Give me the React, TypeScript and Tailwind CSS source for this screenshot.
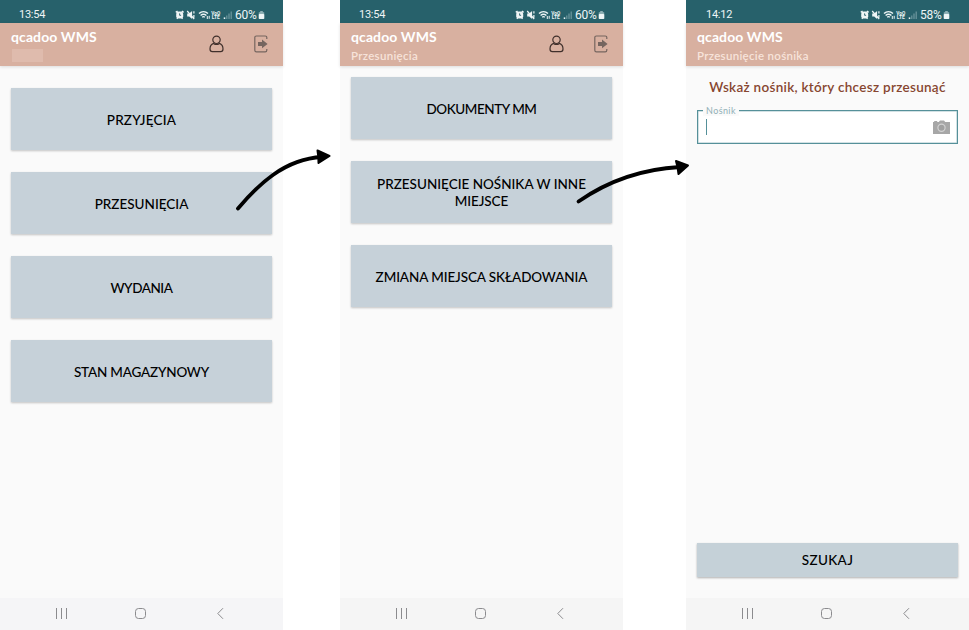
import React from "react";

const FONT = "font-['Lato','Open_Sans',sans-serif]";

function StatusIcons() {
  return (
    <svg width="58" height="12" viewBox="0 0 58 12" fill="none" stroke="#eef5f6">
      {/* alarm clock */}
      <rect x="1.2" y="2.600" width="7" height="7" rx="2.400" fill="#eef5f6" stroke="none" />
      <path d="M.8 3.400 2.600 2M8.600 3.400 6.800 2M1.800 9.800l1-1M7.600 9.800l-1-1" strokeWidth="1.400" />
      <path d="M4.600 4.400v1.900h1.500" stroke="#27616b" strokeWidth=".9" />
      {/* muted speaker */}
      <path d="M12.200 4.400h2l2.900-2.400v8l-2.900-2.400h-2z" fill="#eef5f6" stroke="none" />
      <path d="M12.200 2l7 8M18.900 2.200v2.200M18.900 6v2.800" strokeWidth="1.200" />
      {/* wifi */}
      <path d="M24 4.600c2.600-2.400 6.400-2.400 9 0M25.600 6.500c1.800-1.600 4-1.600 5.800 0M27.200 8.200c.8-.7 1.800-.7 2.600 0" strokeWidth="1.400" />
      <path d="M32.300 7v3M34.200 6.800v3" strokeWidth="1" />
      {/* signal */}
      <path d="M49.500 10V8.400" strokeWidth="1.500" />
      <path d="M51.800 10V6.500M54 10V4.500M56.200 10V2.500" stroke="#6f989f" strokeWidth="1.200" />
      <g fill="#eef5f6" stroke="none" fontFamily="Roboto, sans-serif" fontWeight="700" fontSize="5">
        <text x="36.300" y="5.600" textLength="9" lengthAdjust="spacingAndGlyphs">VoO</text>
        <text x="36.800" y="10.200" textLength="8" lengthAdjust="spacingAndGlyphs">LTE</text>
      </g>
    </svg>
  );
}

function StatusBar({ time, battery, inset }: { time: string; battery: string; inset: string }) {
  return (
    <div className={`flex h-[23px] shrink-0 items-end justify-between bg-[#27616b] font-['Roboto',sans-serif] text-[11px] leading-[14px] text-[#eef5f6] ${inset}`}>
      <span className="tracking-[-0.25px]">{time}</span>
      <div className="flex items-center">
        <StatusIcons />
        <span className="ml-[2px] w-[23px] text-[12px] tracking-[-0.2px]">{battery}</span>
        <svg width="7" height="10" viewBox="0 0 7 10">
          <path d="M2.200 1h2.600v1.200h1.400v2.200H.8V2.200h1.400z" fill="#8eb0b5" />
          <rect x=".7" y="4" width="5.600" height="5" rx=".8" fill="#eef5f6" />
        </svg>
      </div>
    </div>
  );
}

function UserIcon() {
  return (
    <svg width="15" height="18" viewBox="0 0 15 18" fill="none" stroke="#40302c" strokeWidth="1.200">
      <circle cx="7.500" cy="4.800" r="3.700" />
      <path d="M4.600 8.400C2 9.300 1 11.400 1 14c0 1.800.8 2.700 2.400 2.700h8.200c1.600 0 2.400-.9 2.400-2.700 0-2.600-1-4.700-3.600-5.600-1.700 1.300-4.100 1.300-5.800 0z" />
    </svg>
  );
}

function ExitIcon() {
  return (
    <svg width="14" height="18" viewBox="0 0 14 18" fill="none" stroke="#75655f" strokeWidth="1.200">
      <path d="M12.800 4V2.600c0-1-.6-1.600-1.600-1.600H2.400c-1 0-1.600.6-1.600 1.600v12.600c0 1 .6 1.600 1.600 1.600h8.800c1 0 1.600-.6 1.600-1.600V14" />
      <path d="M4 7h4V4.600L13.600 9 8 13.300V11H4z" fill="#75655f" stroke="none" />
    </svg>
  );
}

function Header({ subtitle, icons }: { subtitle?: React.ReactNode; icons?: boolean }) {
  return (
    <div className="flex h-[43px] shrink-0 justify-between bg-[#d8b0a0] pr-[15px] pl-[11px] shadow-[0_1px_3px_rgba(0,0,0,0.12)]">
      <div className="flex flex-col pt-[5px]">
        <span className="text-[14px] leading-[18px] font-bold tracking-[0.1px] text-white">qcadoo WMS</span>
        {subtitle}
      </div>
      {icons && (
        <div className="flex gap-[30px] pt-[12px]">
          <UserIcon />
          <ExitIcon />
        </div>
      )}
    </div>
  );
}

function Subtitle({ children }: { children: React.ReactNode }) {
  return (
    <span className="pt-[2px] text-[11.5px] leading-[16px] font-semibold tracking-[0.3px] text-[#f7e3da]">{children}</span>
  );
}

function NavBar({ tone }: { tone: string }) {
  return (
    <div className={`flex h-8 shrink-0 items-center pb-[2px] pl-[55px] ${tone}`}>
      <svg width="170" height="14" viewBox="0 0 170 14" fill="none" stroke="#8b8b8e" strokeWidth="1">
        <path d="M1.500 2v11M6.500 2v11M11.500 2v11" />
        <rect x="80.500" y="2.500" width="10" height="10" rx="3" />
        <path d="M168 2.200 162.800 7.500l5.200 5.300" />
      </svg>
    </div>
  );
}

function Tile({ children }: { children: React.ReactNode }) {
  return (
    <button className="flex h-[62px] w-[261px] items-center justify-center bg-[#c6d1d9] pt-[2px] text-center text-[13.5px] leading-[17px] font-medium whitespace-nowrap text-black shadow-[0_1px_2px_rgba(0,0,0,0.22)]">
      <span>{children}</span>
    </button>
  );
}

function Arrow({ className, curve, head }: { className: string; curve: string; head: string }) {
  return (
    <svg className={`pointer-events-none absolute ${className}`} width="120" height="64" viewBox="0 0 120 64" fill="none" stroke="#000" strokeLinecap="round" strokeLinejoin="round">
      <path d={curve} strokeWidth="3.800" />
      <path d={head} fill="#000" strokeWidth="2" />
    </svg>
  );
}

const phone = "flex h-[630px] w-[283px] shrink-0 flex-col bg-[#fafafa]";

export default function App() {
  return (
    <main className={`relative flex h-[630px] w-[969px] overflow-hidden bg-white ${FONT}`}>
      <section className={phone}>
        <StatusBar time="13:54" battery="60%" inset="pr-[18px] pb-px pl-[19px]" />
        <Header icons subtitle={<span className="mt-[3px] ml-px h-[13px] w-[31px] bg-[#dfbbad]" />} />
        <div className="flex grow flex-col items-center gap-[22px] pt-[22px]">
          <Tile><span className="tracking-[0.2px]">PRZYJĘCIA</span></Tile>
          <Tile><span className="tracking-[0px]">PRZESUNIĘCIA</span></Tile>
          <Tile><span className="tracking-[-0.45px]">WYDANIA</span></Tile>
          <Tile><span className="tracking-[-0.2px]">STAN MAGAZYNOWY</span></Tile>
        </div>
        <NavBar tone="bg-[#f5f5f7]" />
      </section>

      <section className={`${phone} ml-[57px]`}>
        <StatusBar time="13:54" battery="60%" inset="pr-[18px] pb-px pl-[19px]" />
        <Header icons subtitle={<Subtitle>Przesunięcia</Subtitle>} />
        <div className="flex grow flex-col items-center gap-[22px] pt-[11px]">
          <Tile><span className="tracking-[-0.45px]">DOKUMENTY MM</span></Tile>
          <Tile>
            <span className="tracking-[0px]">PRZESUNIĘCIE NOŚNIKA W INNE</span>
            <br />
            <span className="tracking-[-0.1px]">MIEJSCE</span>
          </Tile>
          <Tile><span className="tracking-[-0.1px]">ZMIANA MIEJSCA SKŁADOWANIA</span></Tile>
        </div>
        <NavBar tone="bg-[#f5f5f5]" />
      </section>

      <section className={`${phone} ml-[63px]`}>
        <StatusBar time="14:12" battery="58%" inset="pr-[19px] pb-px pl-[20px]" />
        <Header subtitle={<Subtitle>Przesunięcie nośnika</Subtitle>} />
        <div className="flex grow flex-col items-center pt-[12px]">
          <p className="text-[13.5px] leading-[18px] font-semibold tracking-[0.29px] whitespace-nowrap text-[#874630]">Wskaż nośnik, który chcesz przesunąć</p>
          <div className="relative mt-[14px] flex h-[34px] w-[261px] items-center justify-between border border-[#559099] bg-white pr-[7px] pl-[8px] shadow-[inset_0_0_0_0.5px_#a5c4c9]">
            <label className="absolute -top-[5px] left-[5px] bg-[#fafafa] px-[3px] text-[9px] leading-[10px] tracking-[0.4px] text-[#91b0b7]">Nośnik</label>
            <span className="h-4 w-px bg-[#559099]" />
            <svg width="17" height="14" viewBox="0 0 17 14">
              <path d="M0 2h1.200V1h3v1h1.600L7 .5h4L12.200 2H17v12H0z" fill="#a7a7a7" />
              <circle cx="8.500" cy="7.700" r="3.600" fill="#a0a0a0" stroke="#d2d2d2" strokeWidth="1.200" />
            </svg>
          </div>
          <button className="mt-auto mb-[21px] flex h-[34px] w-[261px] items-center justify-center bg-[#c5d1d8] pt-px text-[13.5px] leading-[17px] font-medium text-black shadow-[0_1px_2px_rgba(0,0,0,0.3)]">
            <span className="tracking-[0.35px]">SZUKAJ</span>
          </button>
        </div>
        <NavBar tone="bg-[#f5f5f5]" />
      </section>

      <Arrow className="top-[147px] left-[230px]" curve="M8 61.500C28 38 54 12 92 10" head="M87.500 3.500 99.500 9 88.500 16 88.300 9.500z" />
      <Arrow className="top-[147px] left-[570px]" curve="M8.500 54.500C38 34 73 22 110 20" head="M106 14 118 18.500 108.500 27 107.500 20z" />
    </main>
  );
}
